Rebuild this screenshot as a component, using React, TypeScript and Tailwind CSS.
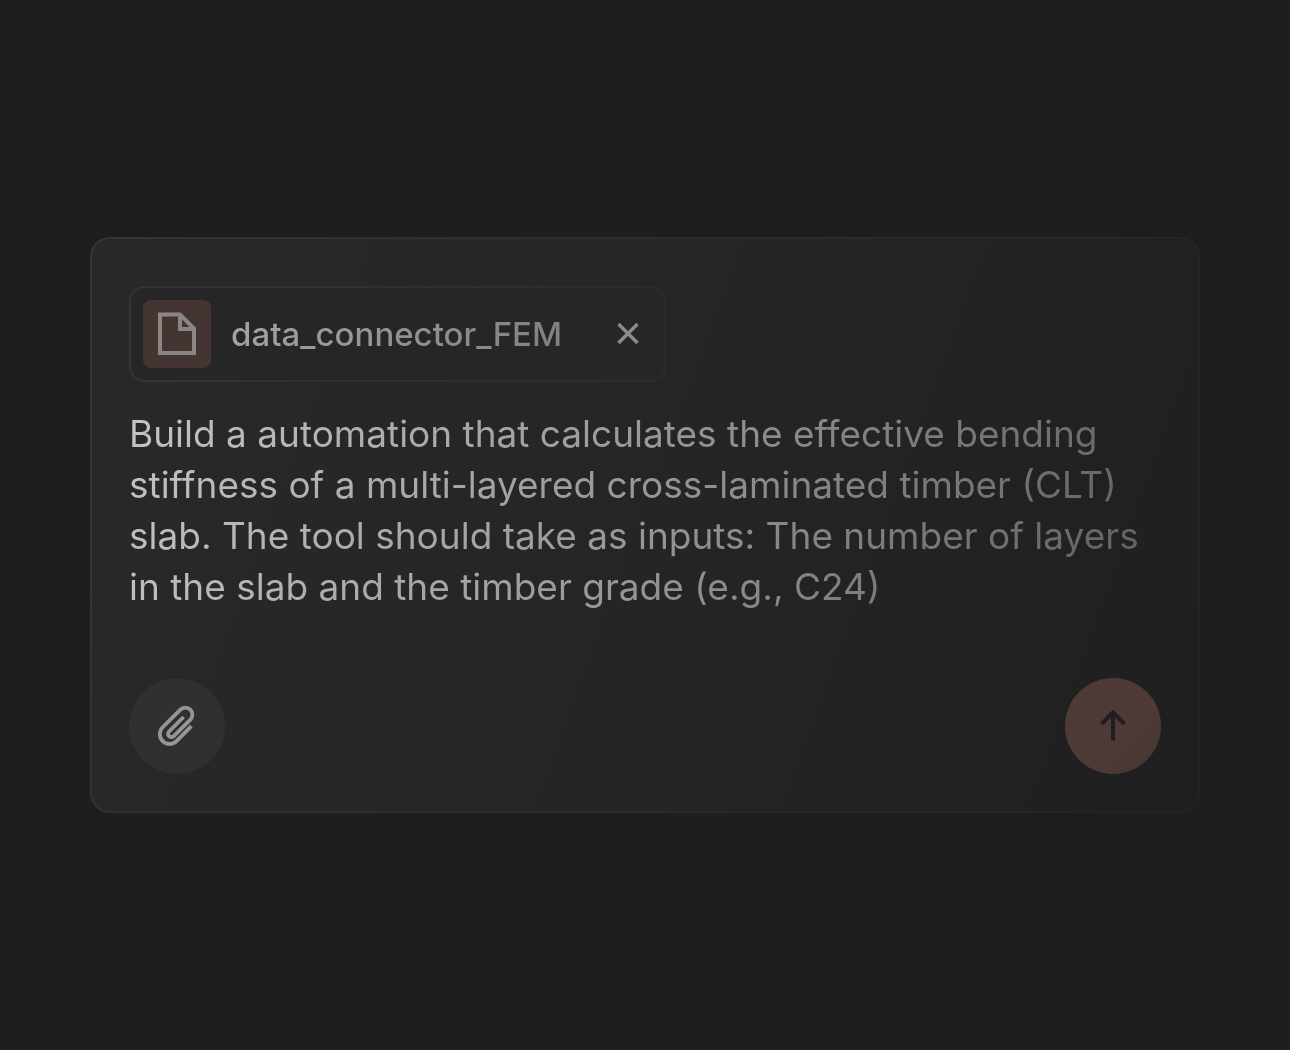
import React, { useState } from 'react';

const DEFAULT_PROMPT =
  'Build a automation that calculates the effective bending stiffness of a multi-layered cross-laminated timber (CLT) slab. The tool should take as inputs: The number of layers in the slab and the timber grade (e.g., C24)';

const FileIcon = () => (
  <svg className="w-10 h-11" viewBox="0 0 40 44" fill="none" stroke="#8a8685" strokeWidth="4" aria-hidden="true">
    <path d="M3 2.5H23L37 16.5V41H3Z" />
    <path d="M23 3V17H37" />
  </svg>
);

const CloseIcon = () => (
  <svg className="w-6 h-6" viewBox="0 0 24 24" fill="none" stroke="#8c8c8c" strokeWidth="3.4" aria-hidden="true">
    <path d="M2.5 2L21.5 21M21.5 2L2.5 21" />
  </svg>
);

const PaperclipIcon = () => (
  <svg
    className="w-12 h-12"
    viewBox="-23.5 -23.5 48 48"
    fill="none"
    stroke="#979595"
    strokeWidth="3.8"
    aria-hidden="true"
  >
    <path
      transform="rotate(45)"
      d="M11 -10V11A9.75 9.75 0 0 1 -8.5 11V-14A7.05 7.05 0 0 1 5.6 -14V9.5A3.3 3.3 0 0 1 -1 9.5V-11"
    />
  </svg>
);

const ArrowUpIcon = () => (
  <svg className="w-8 h-8" viewBox="0 0 32 32" fill="none" stroke="#1f1f1f" strokeWidth="4" aria-hidden="true">
    <path d="M16 30.5V3" />
    <path d="M4.5 14L16 2.5L27.5 14" />
  </svg>
);

const Attachment = ({ name, onRemove }: { name: string; onRemove: () => void }) => (
  <div className="w-fit rounded-2xl bg-linear-to-r from-[#343434] to-[#2c2c2c] p-[2px]">
    <div className="flex items-center rounded-[14px] bg-[#262626] p-3">
      <div className="flex h-[68px] w-[68px] items-center justify-center rounded-lg bg-[#443532]">
        <FileIcon />
      </div>
      <span className="ml-5 bg-linear-to-r from-[#a3a3a3] to-[#858080] bg-clip-text text-[33px] leading-[48px] font-medium text-transparent">
        {name}
      </span>
      <button type="button" aria-label={`Remove ${name}`} onClick={onRemove} className="ml-[42px] p-3">
        <CloseIcon />
      </button>
    </div>
  </div>
);

const App: React.FC = () => {
  const [prompt, setPrompt] = useState(DEFAULT_PROMPT);
  const [files, setFiles] = useState(['data_connector_FEM']);

  return (
    <main className="flex min-h-screen items-center justify-center bg-[#1e1e1e] px-[90px] font-['Inter',sans-serif]">
      <div className="w-full max-w-[1280px] rounded-[20px] bg-linear-110 from-[#353535] via-[#2c2c2c] to-[#222222] p-[2px]">
        <form
          onSubmit={(e) => e.preventDefault()}
          className="rounded-[18px] bg-linear-110 from-[#292929] via-[#252525] to-[#1f1f1f] px-[37px] pt-[47px] pb-[37px]"
        >
          {files.map((name) => (
            <Attachment key={name} name={name} onRemove={() => setFiles(files.filter((f) => f !== name))} />
          ))}

          <textarea
            aria-label="Prompt"
            rows={4}
            value={prompt}
            onChange={(e) => setPrompt(e.target.value)}
            spellCheck={false}
            className="mt-[26px] block w-full resize-none overflow-hidden bg-linear-110 from-[#c4c4c4] via-[#989696] to-[#625d5c] bg-clip-text text-[37px] leading-[51px] text-transparent caret-[#c4c4c4] outline-none"
          />

          <div className="mt-[66px] flex items-center justify-between">
            <button
              type="button"
              aria-label="Attach file"
              className="flex h-24 w-24 items-center justify-center rounded-full bg-[#303030]"
            >
              <PaperclipIcon />
            </button>
            <button
              type="submit"
              aria-label="Send"
              className="flex h-24 w-24 items-center justify-center rounded-full bg-linear-to-br from-[#4e3a36] from-60% to-[#453532]"
            >
              <ArrowUpIcon />
            </button>
          </div>
        </form>
      </div>
    </main>
  );
};

export default App;
